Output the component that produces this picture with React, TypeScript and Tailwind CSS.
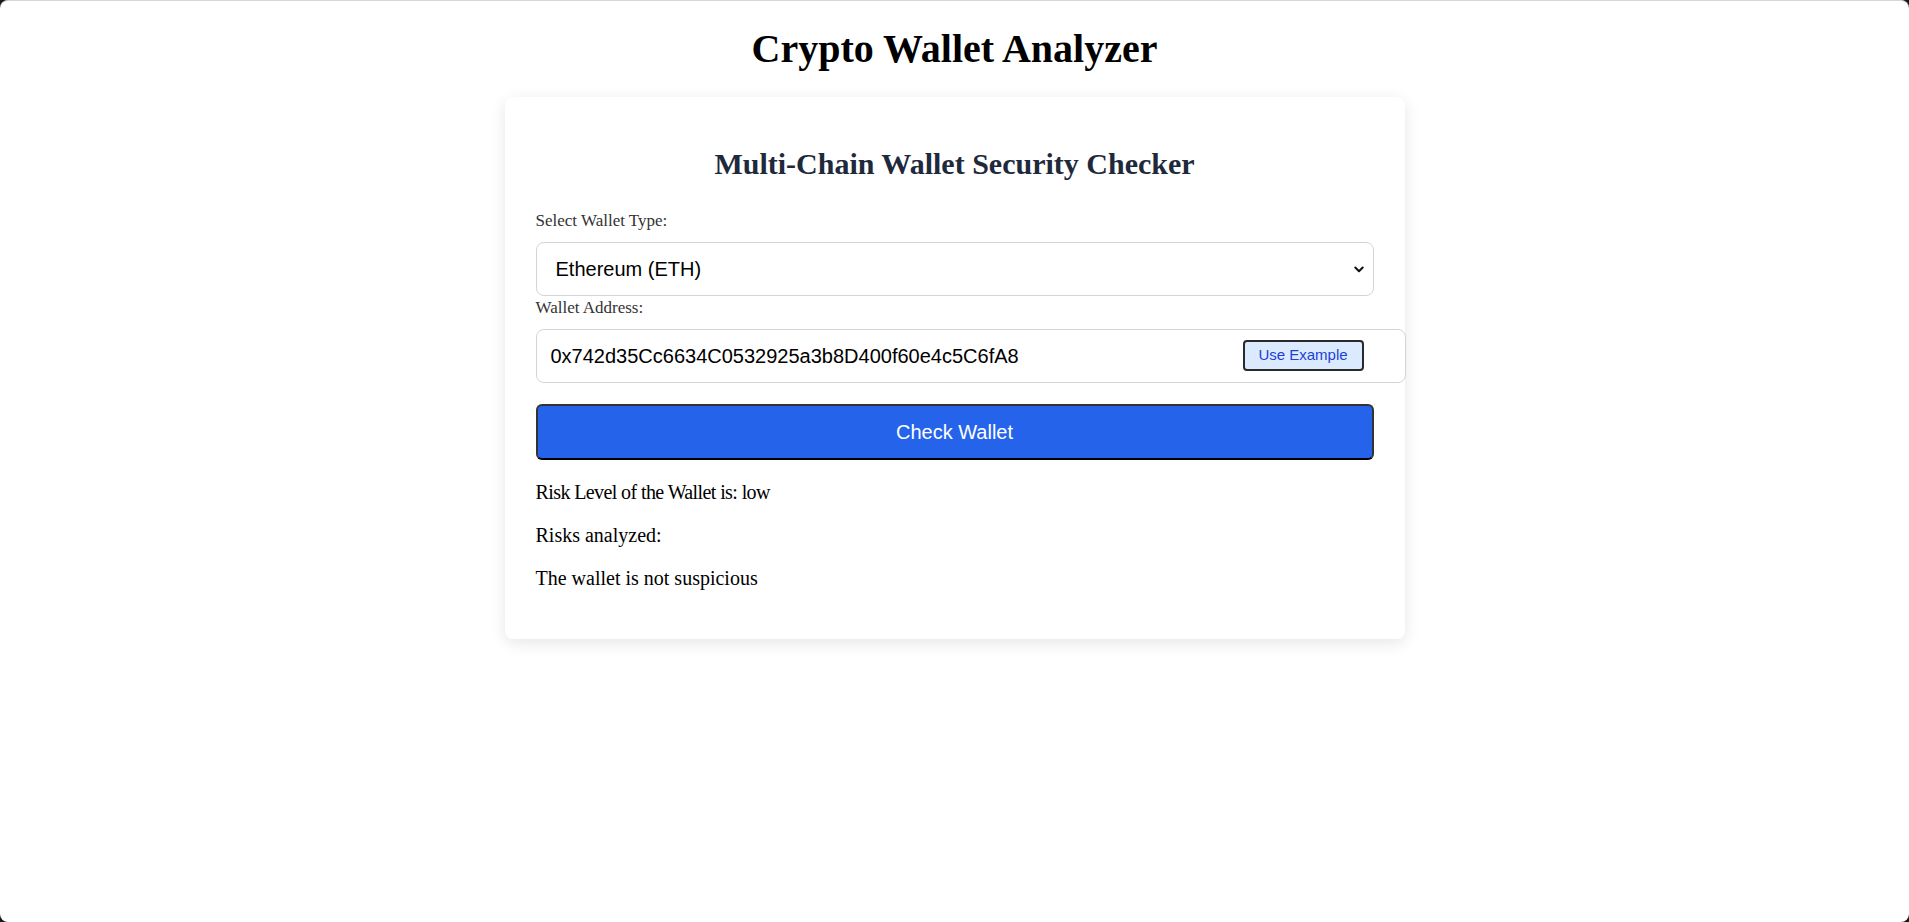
import React from "react";

export default function App() {
  return (
    <div className="h-[922px] w-full overflow-hidden bg-[#1a1a1a]">
      <div className="flex h-full w-full flex-col items-center rounded-[8px] border-t border-[#d6d6d6] bg-white">
        <h1 className="mt-[24px] text-[40px] font-bold leading-[48px] text-black [font-family:'Liberation_Serif',serif]">
          Crypto Wallet Analyzer
        </h1>
        <div className="mt-[24px] w-[900px] rounded-[8px] bg-white px-[31px] pb-[49px] pt-[49px] shadow-[0_4px_16px_rgba(0,0,0,0.1)] [font-family:'Liberation_Serif',serif]">
          <h2 className="text-center text-[30px] font-bold leading-[36px] text-[#1e293b]">
            Multi-Chain Wallet Security Checker
          </h2>
          <div className="mt-[29px] text-[17px] leading-[20px] text-[#333]">Select Wallet Type:</div>
          <div className="relative mt-[11px] flex h-[54px] w-full items-center rounded-[8px] border border-[#d4d4d8] pl-[19px] pr-[9px] [font-family:'Liberation_Sans',sans-serif]">
            <span className="flex-1 text-[20px] text-black">Ethereum (ETH)</span>
            <svg width="10" height="7" viewBox="0 0 10 7" fill="none">
              <path d="M1.3 1.5 L5 5.2 L8.7 1.5" stroke="#111" strokeWidth="2" strokeLinecap="round" strokeLinejoin="round" />
            </svg>
          </div>
          <div className="mt-[2px] text-[17px] leading-[20px] text-[#333]">Wallet Address:</div>
          <div className="mt-[11px] flex h-[54px] w-[870px] items-start rounded-[8px] border border-[#d4d4d8] pl-[14px] pr-[41px] [font-family:'Liberation_Sans',sans-serif]">
            <span className="flex-1 self-center text-[20px] text-black">0x742d35Cc6634C0532925a3b8D400f60e4c5C6fA8</span>
            <button className="mt-[10px] flex h-[31px] w-[121px] items-center justify-center rounded-[4px] border-2 border-[#2a2a2a] bg-[#dbeafe] text-[15px] text-[#1d3fd8]">
              Use Example
            </button>
          </div>
          <button className="mt-[21px] flex h-[56px] w-full items-center justify-center rounded-[6px] border-2 border-[#333] border-b-black bg-[#2563eb] text-[20px] text-white [font-family:'Liberation_Sans',sans-serif]">
            Check Wallet
          </button>
          <p className="mt-[21px] text-[20px] leading-[23px] tracking-[-0.6px] text-black">Risk Level of the Wallet is: low</p>
          <p className="mt-[20px] text-[20px] leading-[23px] text-black">Risks analyzed:</p>
          <p className="mt-[20px] text-[20px] leading-[23px] text-black">The wallet is not suspicious</p>
        </div>
      </div>
    </div>
  );
}
